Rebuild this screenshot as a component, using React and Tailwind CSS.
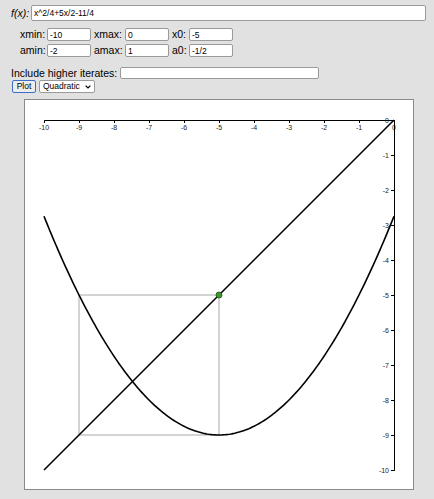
import React from "react";

// plot scale: 35px per unit, origin of axes at (394,120) in page coords
const X0 = 44;
const Y0 = 120;
const S = 35;
const px = (x) => X0 + (x + 10) * S;
const py = (y) => Y0 - y * S;
const f = (x) => (x * x) / 4 + (5 * x) / 2 - 11 / 4;

function curvePath() {
  const pts = [];
  for (let i = 0; i <= 200; i++) {
    const x = -10 + (i / 200) * 10;
    pts.push(`${px(x).toFixed(2)},${py(f(x)).toFixed(2)}`);
  }
  return "M" + pts.join("L");
}

const TICKS = [-10, -9, -8, -7, -6, -5, -4, -3, -2, -1, 0];

function Field({ label, value, labelW, inputW }) {
  return (
    <>
      <span className={`${labelW} text-[10.5px] leading-none`}>{label}</span>
      <input
        readOnly
        value={value}
        className={`${inputW} h-[13px] bg-white border border-[#9a9a9a] rounded-[2px] px-[2px] text-[8.5px] leading-none outline-none`}
      />
    </>
  );
}

function Plot() {
  return (
    <div className="ml-[24px] mt-[6px] w-[390px] h-[391px] bg-white border border-[#8a8a8a] overflow-hidden">
      <svg width="388" height="389" className="block">
        <g transform="translate(-25,-100)" fontFamily="'Liberation Sans', Arial, sans-serif" fontSize="7" fill="#222">
          {/* x axis */}
          <path d={`M${X0 + 0.5},123 V120.5 H394.5 V123`} stroke="#000" strokeWidth="1" fill="none" />
          {TICKS.map((t) => (
            <g key={"x" + t}>
              <line x1={px(t) + 0.5} x2={px(t) + 0.5} y1="120.5" y2="123" stroke="#000" />
              <text x={px(t)} y="129.5" textAnchor="middle">{t}</text>
            </g>
          ))}
          {/* y axis */}
          <path d={`M391,120.5 H394.5 V470.5 H391`} stroke="#000" strokeWidth="1" fill="none" />
          {TICKS.map((t) => (
            <g key={"y" + t}>
              <line x1="391" x2="394.5" y1={py(t) + 0.5} y2={py(t) + 0.5} stroke="#000" />
              <text x="389" y={py(t) + 2.5} textAnchor="end">{t}</text>
            </g>
          ))}
          {/* cobweb */}
          <path
            d={`M${px(-5)},${py(-5)} V${py(-9)} H${px(-9)} V${py(-5)} H${px(-5)}`}
            stroke="#a8a8a8"
            strokeWidth="1"
            fill="none"
          />
          {/* diagonal */}
          <line x1={px(-10)} y1={py(-10)} x2={px(0)} y2={py(0)} stroke="#000" strokeWidth="1.6" />
          {/* map */}
          <path d={curvePath()} stroke="#000" strokeWidth="1.6" fill="none" />
          <circle cx={px(-5)} cy={py(-5)} r="3" fill="#3c9a2c" stroke="#1d4d16" strokeWidth="0.8" />
        </g>
      </svg>
    </div>
  );
}

export default function App() {
  return (
    <div
      className="min-h-screen w-full bg-[#e1e1e1] text-black overflow-hidden"
      style={{ fontFamily: "'Liberation Sans', Arial, Helvetica, sans-serif" }}
    >
      {/* f(x) row */}
      <div className="flex items-center pl-[11px] pr-[8px] pt-[5px]">
        <span className="italic text-[10.5px] leading-none mr-[2px]">f(x):</span>
        <input
          readOnly
          value="x^2/4+5x/2-11/4"
          className="flex-1 h-[16px] bg-white border border-[#9a9a9a] rounded-[2px] px-[2px] text-[8.5px] leading-none outline-none"
        />
      </div>

      {/* ranges */}
      <div className="mt-[7px] pl-[20px] flex flex-col gap-[3px]">
        <div className="flex items-center gap-[3px]">
          <Field label="xmin:" value="-10" labelW="w-[24px]" inputW="w-[44px]" />
          <Field label="xmax:" value="0" labelW="w-[28px]" inputW="w-[44px]" />
          <Field label="x0:" value="-5" labelW="w-[14px]" inputW="w-[44px]" />
        </div>
        <div className="flex items-center gap-[3px]">
          <Field label="amin:" value="-2" labelW="w-[24px]" inputW="w-[44px]" />
          <Field label="amax:" value="1" labelW="w-[28px]" inputW="w-[44px]" />
          <Field label="a0:" value="-1/2" labelW="w-[14px]" inputW="w-[44px]" />
        </div>
      </div>

      {/* higher iterates */}
      <div className="mt-[10px] pl-[11px] flex items-center gap-[3px]">
        <span className="text-[10.5px] leading-none">Include higher iterates:</span>
        <input
          readOnly
          className="w-[199px] h-[12px] bg-white border border-[#9a9a9a] rounded-[2px] outline-none"
        />
      </div>

      {/* controls */}
      <div className="mt-[1px] pl-[12px] flex items-center gap-[3px]">
        <button className="w-[24px] h-[13px] bg-[#ececec] border border-[#3b6fc7] rounded-[2px] text-[8.5px] leading-none">
          Plot
        </button>
        <div className="w-[56px] h-[13px] bg-white border border-[#9a9a9a] rounded-[2px] flex items-center justify-between pl-[3px] pr-[3px] text-[8.5px] leading-none">
          <span>Quadratic</span>
          <svg width="6" height="4" viewBox="0 0 6 4">
            <path d="M0.6 0.6 L3 3 L5.4 0.6" stroke="#000" strokeWidth="1.2" fill="none" />
          </svg>
        </div>
      </div>

      <Plot />
    </div>
  );
}
